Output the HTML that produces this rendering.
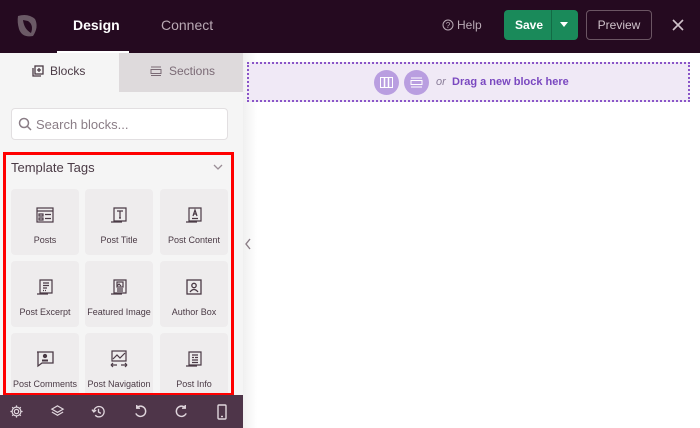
<!DOCTYPE html>
<html><head><style>
*{margin:0;padding:0;box-sizing:border-box}
body{width:700px;height:428px;overflow:hidden;font-family:"Liberation Sans",sans-serif;background:#fff;position:relative}
.top{position:absolute;left:0;top:0;width:700px;height:53px;background:#250a20}
.abs{position:absolute}
.side{position:absolute;left:0;top:53px;width:243px;height:342px;background:#f5f5f5}
.card{position:absolute;width:68px;background:#eeeced;border-radius:4px;height:66px}
.card span{position:absolute;left:0;right:0;top:46px;text-align:center;font-size:9px;color:#4a3a45;white-space:nowrap}
.card svg{position:absolute;left:25px;top:17px}
.bb{position:absolute;left:0;top:395px;width:243px;height:33px;background:#4e3549}
.bb svg{position:absolute;top:9px}
</style></head><body>
<div class="top">
 <svg class="abs" style="left:14px;top:11px" width="26" height="28" viewBox="0 0 26 28"><path d="M4 5 Q14 2 21 8 Q25 16 19 25 Q8 27 5 18 Q3 11 4 5Z M9 9 Q10 18 17 22 Q20 14 14 10Z" fill="#6b5a66" fill-rule="evenodd"/></svg>
 <div class="abs" style="left:73px;top:17px;color:#fff;font-size:14px;font-weight:bold">Design</div>
 <div class="abs" style="left:57px;top:51px;width:72px;height:2px;background:#fff"></div>
 <div class="abs" style="left:161px;top:17px;color:#b9a9b4;font-size:14px">Connect</div>
 <svg class="abs" style="left:442px;top:19px" width="12" height="12"><circle cx="6" cy="6" r="5" stroke="#b9a9b4" fill="none"/><text x="6" y="9" font-size="8" text-anchor="middle" fill="#b9a9b4" font-family="Liberation Sans">?</text></svg>
 <div class="abs" style="left:457px;top:18px;color:#b9a9b4;font-size:12px">Help</div>
 <div class="abs" style="left:504px;top:10px;width:74px;height:30px;background:#1a8a5a;border-radius:4px"></div>
 <div class="abs" style="left:551px;top:10px;width:1px;height:30px;background:#126b45"></div>
 <div class="abs" style="left:515px;top:18px;color:#fff;font-size:12px;font-weight:bold">Save</div>
 <div class="abs" style="left:560px;top:22px;width:0;height:0;border-left:4px solid transparent;border-right:4px solid transparent;border-top:5px solid #fff"></div>
 <div class="abs" style="left:586px;top:10px;width:66px;height:30px;border:1px solid #6b5563;border-radius:4px;color:#cfc2ca;font-size:12px;text-align:center;line-height:28px">Preview</div>
 <svg class="abs" style="left:672px;top:19px" width="12" height="12"><path d="M1 1L11 11M11 1L1 11" stroke="#cfc2ca" stroke-width="1.6"/></svg>
</div>
<div class="side">
 <div class="abs" style="left:119px;top:0;width:124px;height:39px;background:#dedadc"></div>
 <svg class="abs" style="left:32px;top:12px" width="12" height="12" viewBox="0 0 12 12"><rect x="3" y="1" width="8" height="8" fill="none" stroke="#4a3a45" stroke-width="1.3"/><path d="M1 3V11H9M7 3V7M5 5H9" stroke="#4a3a45" stroke-width="1.3" fill="none"/></svg>
 <div class="abs" style="left:50px;top:11px;font-size:12px;color:#4a3a45">Blocks</div>
 <svg class="abs" style="left:150px;top:13px" width="12" height="10"><path d="M1 1H11M1 3.5H11V7.5H1ZM1 9.5H11" stroke="#7a6a75" fill="none"/></svg>
 <div class="abs" style="left:169px;top:11px;font-size:12px;color:#7a6a75">Sections</div>
 <div class="abs" style="left:11px;top:55px;width:217px;height:32px;background:#fff;border:1px solid #e2dfe1;border-radius:4px"></div>
 <svg class="abs" style="left:18px;top:64px" width="14" height="14"><circle cx="6" cy="6" r="4.5" stroke="#8a7d86" stroke-width="1.5" fill="none"/><path d="M9.5 9.5L13 13" stroke="#8a7d86" stroke-width="1.5"/></svg>
 <div class="abs" style="left:36px;top:64px;font-size:13px;color:#8a7d86">Search blocks...</div>
</div>
<div class="abs" style="left:3px;top:152px;width:231px;height:244px;border:3px solid #f00"></div>
<div class="abs" style="left:11px;top:160px;font-size:13px;color:#4a3a45">Template Tags</div>
<svg class="abs" style="left:213px;top:164px" width="10" height="7"><path d="M1 1L5 5L9 1" stroke="#9a8e96" stroke-width="1.3" fill="none"/></svg>
<div style="position:absolute;left:0;top:0;width:243px;height:393px;overflow:hidden">
<div class="card" style="left:11px;top:189px"><svg width="18" height="18" viewBox="0 0 18 18" fill="none" stroke="#4a3a45" stroke-width="1.2"><rect x="1" y="2" width="16" height="14"/><path d="M1 5H17M3 8H7V10H3ZM9 8.5H15M3 12H7V14H3ZM9 12.5H15"/></svg><span>Posts</span></div>
<div class="card" style="left:85px;top:189px"><svg width="18" height="18" viewBox="0 0 18 18" fill="none" stroke="#4a3a45" stroke-width="1.2"><path d="M4 15V2H16V15H4ZM1 16H12"/><path d="M7 5H13M10 5V12M9 12H11"/></svg><span>Post Title</span></div>
<div class="card" style="left:160px;top:189px"><svg width="18" height="18" viewBox="0 0 18 18" fill="none" stroke="#4a3a45" stroke-width="1.2"><path d="M4 15V2H16V15H4ZM1 16H12"/><path d="M8 10L10 4L12 10M8.7 8H11.3M7 12.5H13"/></svg><span>Post Content</span></div>
<div class="card" style="left:11px;top:261px"><svg width="18" height="18" viewBox="0 0 18 18" fill="none" stroke="#4a3a45" stroke-width="1.2"><path d="M4 15V2H16V15H4ZM1 16H12"/><path d="M7 5H13M7 7.5H13M7 10H11M7 12.5H8M9 12.5H10"/></svg><span>Post Excerpt</span></div>
<div class="card" style="left:85px;top:261px"><svg width="18" height="18" viewBox="0 0 18 18" fill="none" stroke="#4a3a45" stroke-width="1.2"><path d="M4 15V2H16V15H4ZM1 16H12"/><rect x="7" y="4" width="6" height="5"/><path d="M7 8L9 6L11 8M7 11H13M7 13H13"/></svg><span>Featured Image</span></div>
<div class="card" style="left:160px;top:261px"><svg width="18" height="18" viewBox="0 0 18 18" fill="none" stroke="#4a3a45" stroke-width="1.3"><rect x="2" y="2" width="14" height="14"/><circle cx="9" cy="7.5" r="2.2"/><path d="M5 14Q9 9 13 14"/></svg><span>Author Box</span></div>
<div class="card" style="left:11px;top:333px"><svg width="18" height="18" viewBox="0 0 18 18" fill="none" stroke="#4a3a45" stroke-width="1.3"><path d="M1 2H17V13H6L2 16V2Z"/><circle cx="9" cy="6" r="1.5" fill="#4a3a45"/><path d="M6 10.5H12" stroke-width="2"/></svg><span>Post Comments</span></div>
<div class="card" style="left:85px;top:333px"><svg width="18" height="18" viewBox="0 0 18 18" fill="none" stroke="#4a3a45" stroke-width="1.2"><rect x="2" y="1" width="14" height="10"/><path d="M3 9L7 5L10 8L15 3M1 15H7M1 15L3 13M1 15L3 17M11 15H17M17 15L15 13M17 15L15 17"/></svg><span>Post Navigation</span></div>
<div class="card" style="left:160px;top:333px"><svg width="18" height="18" viewBox="0 0 18 18" fill="none" stroke="#4a3a45" stroke-width="1.2"><path d="M4 15V2H16V15H4ZM1 16H12"/><path d="M7 5H13M7 7.5H9M10 7.5H13M7 10H13M7 12.5H13"/></svg><span>Post Info</span></div>
</div>
<div class="bb">
<svg style="left:9px" width="15" height="15" viewBox="0 0 16 16" fill="none" stroke="#e0d6dd" stroke-width="1.3"><circle cx="8" cy="8" r="2.3"/><path d="M8 1.5V3.5M8 12.5V14.5M1.5 8H3.5M12.5 8H14.5M3.4 3.4L4.8 4.8M11.2 11.2L12.6 12.6M3.4 12.6L4.8 11.2M11.2 4.8L12.6 3.4"/><circle cx="8" cy="8" r="4.7"/></svg>
<svg style="left:50px" width="15" height="15" viewBox="0 0 16 16" fill="none" stroke="#e0d6dd" stroke-width="1.3"><path d="M8 2L14 5.5L8 9L2 5.5Z M2 8.5L8 12L14 8.5"/></svg>
<svg style="left:91px" width="15" height="15" viewBox="0 0 16 16" fill="none" stroke="#e0d6dd" stroke-width="1.4"><path d="M3 8A5.5 5.5 0 1 1 4.5 12M1 6L3 8.5L5.5 6.5M8 5V8.5L10.5 10"/></svg>
<svg style="left:133px" width="15" height="15" viewBox="0 0 16 16" fill="none" stroke="#e0d6dd" stroke-width="1.5"><path d="M4 4A5.5 5.5 0 1 1 3 10M4 1V4.5H7.5"/></svg>
<svg style="left:174px" width="15" height="15" viewBox="0 0 16 16" fill="none" stroke="#e0d6dd" stroke-width="1.5"><path d="M12 4A5.5 5.5 0 1 0 13 10M12 1V4.5H8.5"/></svg>
<svg style="left:216px" width="12" height="16" viewBox="0 0 12 16" fill="none" stroke="#e0d6dd" stroke-width="1.4"><rect x="2" y="1" width="8" height="14" rx="1"/><path d="M5 12.5H7"/></svg>
</div>
<div class="abs" style="left:243px;top:53px;width:14px;height:375px;background:linear-gradient(90deg,#f0f0f0,#fff)"></div>
<svg class="abs" style="left:244px;top:238px" width="8" height="12"><path d="M6 1L2 6L6 11" stroke="#8a7d86" stroke-width="1.4" fill="none"/></svg>
<div class="abs" style="left:247px;top:62px;width:443px;height:40px;background:#f0e9f6;border:2px dotted #8a55c8"></div>
<div class="abs" style="left:374px;top:70px;width:25px;height:25px;border-radius:50%;background:#b99ee0"></div>
<svg class="abs" style="left:380px;top:77px" width="13" height="11"><rect x="0.5" y="0.5" width="12" height="10" fill="none" stroke="#fff"/><path d="M4.5 1V10M8.5 1V10" stroke="#fff" stroke-width="1.5"/></svg>
<div class="abs" style="left:404px;top:70px;width:25px;height:25px;border-radius:50%;background:#b99ee0"></div>
<svg class="abs" style="left:410px;top:77px" width="13" height="11"><path d="M1 1H12M1 3.5H12V7.5H1ZM1 10H12" stroke="#fff" fill="none"/></svg>
<div class="abs" style="left:436px;top:76px;font-size:11px;color:#8a7d99;font-style:italic">or</div>
<div class="abs" style="left:452px;top:76px;font-size:11px;color:#7a48c0;font-weight:bold">Drag a new block here</div>
</body></html>
